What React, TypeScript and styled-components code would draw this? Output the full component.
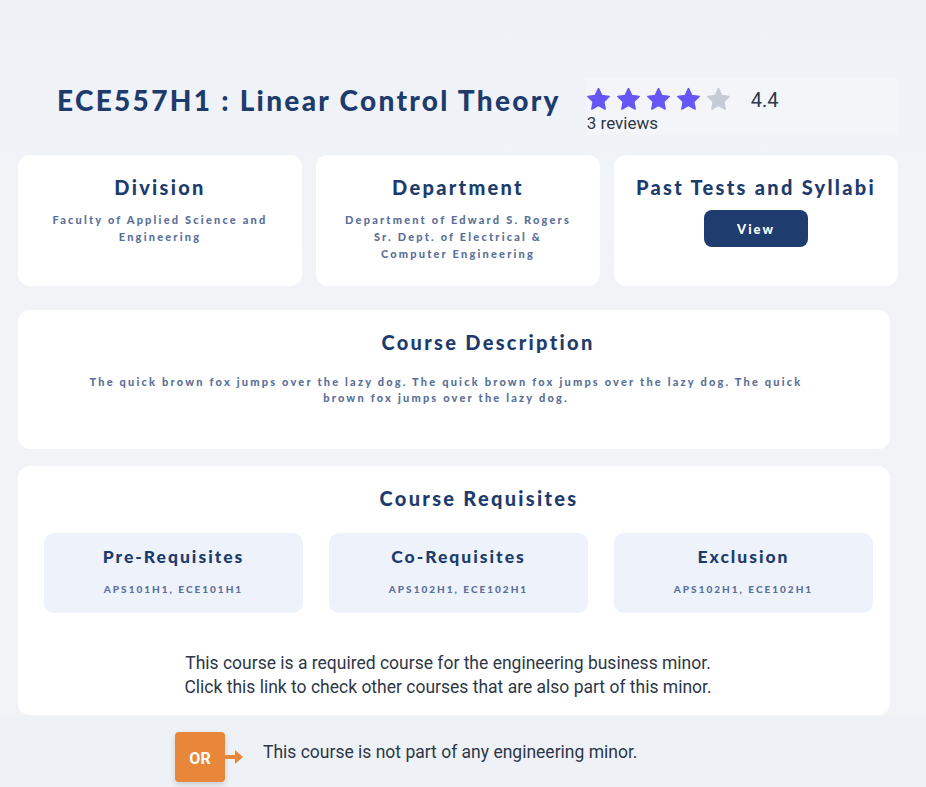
import React from "react";
import styled, { createGlobalStyle } from "styled-components";

const Global = createGlobalStyle`
  html, body { margin: 0; padding: 0; background: #f1f3f7; }
  body { font-family: "Lato", "Open Sans", sans-serif; }
`;

const Page = styled.div`
  width: 926px;
  min-height: 787px;
  background: linear-gradient(#eef2f6 0, #f2f3f7 300px, #f2f3f7 715px, #eef2f6 716px);
  box-sizing: border-box;
  padding: 78px 28px 0 18px;
  display: flex;
  flex-direction: column;
`;

const Header = styled.div`
  display: flex;
  align-items: flex-start;
  height: 77px;
`;

const Title = styled.h1`
  margin: 5px 0 0 39px;
  font-family: "Lato", sans-serif;
  font-weight: 900;
  font-size: 28px;
  letter-spacing: 2.3px;
  color: #1d3c6d;
  white-space: nowrap;
`;

const RatingBox = styled.div`
  margin-left: 25px;
  margin-top: 0;
  width: 330px;
  height: 57px;
  background: #f3f5f9;
  display: flex;
  flex-direction: column;
  padding-top: 9px;
  box-sizing: border-box;
`;

const StarsRow = styled.div`
  display: flex;
  align-items: center;
  gap: 5px;
`;

const RatingValue = styled.span`
  margin-left: 15px;
  font-family: "Roboto", sans-serif;
  font-size: 20px;
  color: #2d3748;
`;

const Reviews = styled.span`
  margin-top: 1px;
  margin-left: 1px;
  font-family: "Roboto", sans-serif;
  font-size: 17px;
  color: #2d3748;
`;

const Star = ({ filled }: { filled: boolean }) => (
  <svg width="25" height="25" viewBox="0 0 24 24">
    <path
      d="M12 1.6l3.1 6.6 7.1.9-5.2 4.9 1.3 7.1L12 17.6l-6.3 3.5 1.3-7.1L1.8 9.1l7.1-.9z"
      fill={filled ? "#6657f5" : "#c5ccd5"}
      stroke={filled ? "#6657f5" : "#c5ccd5"}
      strokeWidth="1.6"
      strokeLinejoin="round"
    />
  </svg>
);

const CardRow = styled.div`
  display: grid;
  grid-template-columns: repeat(3, 284px);
  gap: 14px;
`;

const Card = styled.div<{ $height?: number; $pad?: string }>`
  background: #ffffff;
  border-radius: 12px;
  height: ${(p) => p.$height ?? 131}px;
  padding: ${(p) => p.$pad ?? "21px 12px 0"};
  box-sizing: border-box;
  display: flex;
  flex-direction: column;
  align-items: center;
  text-align: center;
`;

const WideCard = styled(Card)<{ $top: number }>`
  width: 872px;
  margin-top: ${(p) => p.$top}px;
`;

const CardTitle = styled.h2<{ $shift?: number }>`
  margin: 0;
  font-family: "Lato", sans-serif;
  font-weight: 900;
  font-size: 20px;
  letter-spacing: 2.3px;
  color: #1d3c6d;
  white-space: nowrap;
  line-height: 22px;
  transform: translateX(${(p) => p.$shift ?? 0}px);
`;

const SmallText = styled.p<{ $width?: number; $top?: number; $lh?: number }>`
  margin: ${(p) => p.$top ?? 13}px 0 0;
  max-width: ${(p) => p.$width ?? 240}px;
  font-family: "Lato", sans-serif;
  font-weight: 900;
  font-size: 11px;
  letter-spacing: 2.2px;
  line-height: ${(p) => p.$lh ?? 17}px;
  color: #5a6f99;
`;

const ViewButton = styled.button`
  margin-top: 12px;
  width: 104px;
  height: 37px;
  border: none;
  border-radius: 8px;
  background: #1e3d6e;
  color: #ffffff;
  font-family: "Lato", sans-serif;
  font-weight: 900;
  font-size: 13px;
  letter-spacing: 2px;
`;

const ReqGrid = styled.div`
  margin: 24px 0 0 9px;
  display: grid;
  grid-template-columns: repeat(3, 259px);
  gap: 26px;
`;

const ReqBox = styled.div`
  height: 80px;
  background: #edf2fb;
  border-radius: 10px;
  display: flex;
  flex-direction: column;
  align-items: center;
  padding-top: 14px;
  box-sizing: border-box;
`;

const ReqTitle = styled.h3`
  margin: 0;
  font-family: "Lato", sans-serif;
  font-weight: 900;
  font-size: 17.5px;
  letter-spacing: 2px;
  color: #1d3c6d;
  line-height: 20px;
`;

const ReqCodes = styled.span`
  margin-top: 16px;
  font-family: "Lato", sans-serif;
  font-weight: 900;
  font-size: 10px;
  letter-spacing: 2px;
  color: #5a6f99;
`;

const MinorText = styled.p`
  margin: 38px 0 0;
  font-family: "Roboto", sans-serif;
  font-size: 17.5px;
  line-height: 24px;
  color: #2d3748;
  transform: translateX(-6px);
`;

const OrRow = styled.div`
  margin: 17px 0 0 157px;
  display: flex;
  align-items: flex-start;
`;

const OrBadge = styled.div`
  width: 50px;
  height: 50px;
  background: #e8863a;
  border-radius: 4px;
  box-shadow: 0 3px 6px rgba(0, 0, 0, 0.15);
  color: #fff;
  font-family: "Roboto", sans-serif;
  font-weight: 700;
  font-size: 16px;
  display: flex;
  align-items: center;
  justify-content: center;
  padding-top: 2px;
  box-sizing: border-box;
`;

const Arrow = styled.svg`
  margin-top: 16px;
`;

const OrText = styled.span`
  margin-left: 20px;
  margin-top: 10px;
  font-family: "Roboto", sans-serif;
  font-size: 17.5px;
  color: #2d3748;
`;

export default function App() {
  return (
    <Page>
      <Global />
      <Header>
        <Title>ECE557H1 : Linear Control Theory</Title>
        <RatingBox>
          <StarsRow>
            <Star filled />
            <Star filled />
            <Star filled />
            <Star filled />
            <Star filled={false} />
            <RatingValue>4.4</RatingValue>
          </StarsRow>
          <Reviews>3 reviews</Reviews>
        </RatingBox>
      </Header>

      <CardRow>
        <Card>
          <CardTitle>Division</CardTitle>
          <SmallText>Faculty of Applied Science and Engineering</SmallText>
        </Card>
        <Card>
          <CardTitle>Department</CardTitle>
          <SmallText $width={228}>
            Department of Edward S. Rogers Sr. Dept. of Electrical &amp; Computer Engineering
          </SmallText>
        </Card>
        <Card>
          <CardTitle>Past Tests and Syllabi</CardTitle>
          <ViewButton>View</ViewButton>
        </Card>
      </CardRow>

      <WideCard $top={24} $height={139} $pad="21px 76px 0 60px">
        <CardTitle $shift={42}>Course Description</CardTitle>
        <SmallText $width={740} $top={21} $lh={16}>
          The quick brown fox jumps over the lazy dog. The quick brown fox jumps over the lazy dog. The quick brown fox jumps over the lazy dog.
        </SmallText>
      </WideCard>

      <WideCard $top={17} $height={249} $pad="21px 0 0">
        <CardTitle $shift={25}>Course Requisites</CardTitle>
        <ReqGrid>
          <ReqBox>
            <ReqTitle>Pre-Requisites</ReqTitle>
            <ReqCodes>APS101H1, ECE101H1</ReqCodes>
          </ReqBox>
          <ReqBox>
            <ReqTitle>Co-Requisites</ReqTitle>
            <ReqCodes>APS102H1, ECE102H1</ReqCodes>
          </ReqBox>
          <ReqBox>
            <ReqTitle>Exclusion</ReqTitle>
            <ReqCodes>APS102H1, ECE102H1</ReqCodes>
          </ReqBox>
        </ReqGrid>
        <MinorText>
          This course is a required course for the engineering business minor.
          <br />
          Click this link to check other courses that are also part of this minor.
        </MinorText>
      </WideCard>

      <OrRow>
        <OrBadge>OR</OrBadge>
        <Arrow width="18" height="18" viewBox="0 0 18 18">
          <path d="M0 7h10V2l8 7-8 7v-5H0z" fill="#e8863a" />
        </Arrow>
        <OrText>This course is not part of any engineering minor.</OrText>
      </OrRow>
    </Page>
  );
}
